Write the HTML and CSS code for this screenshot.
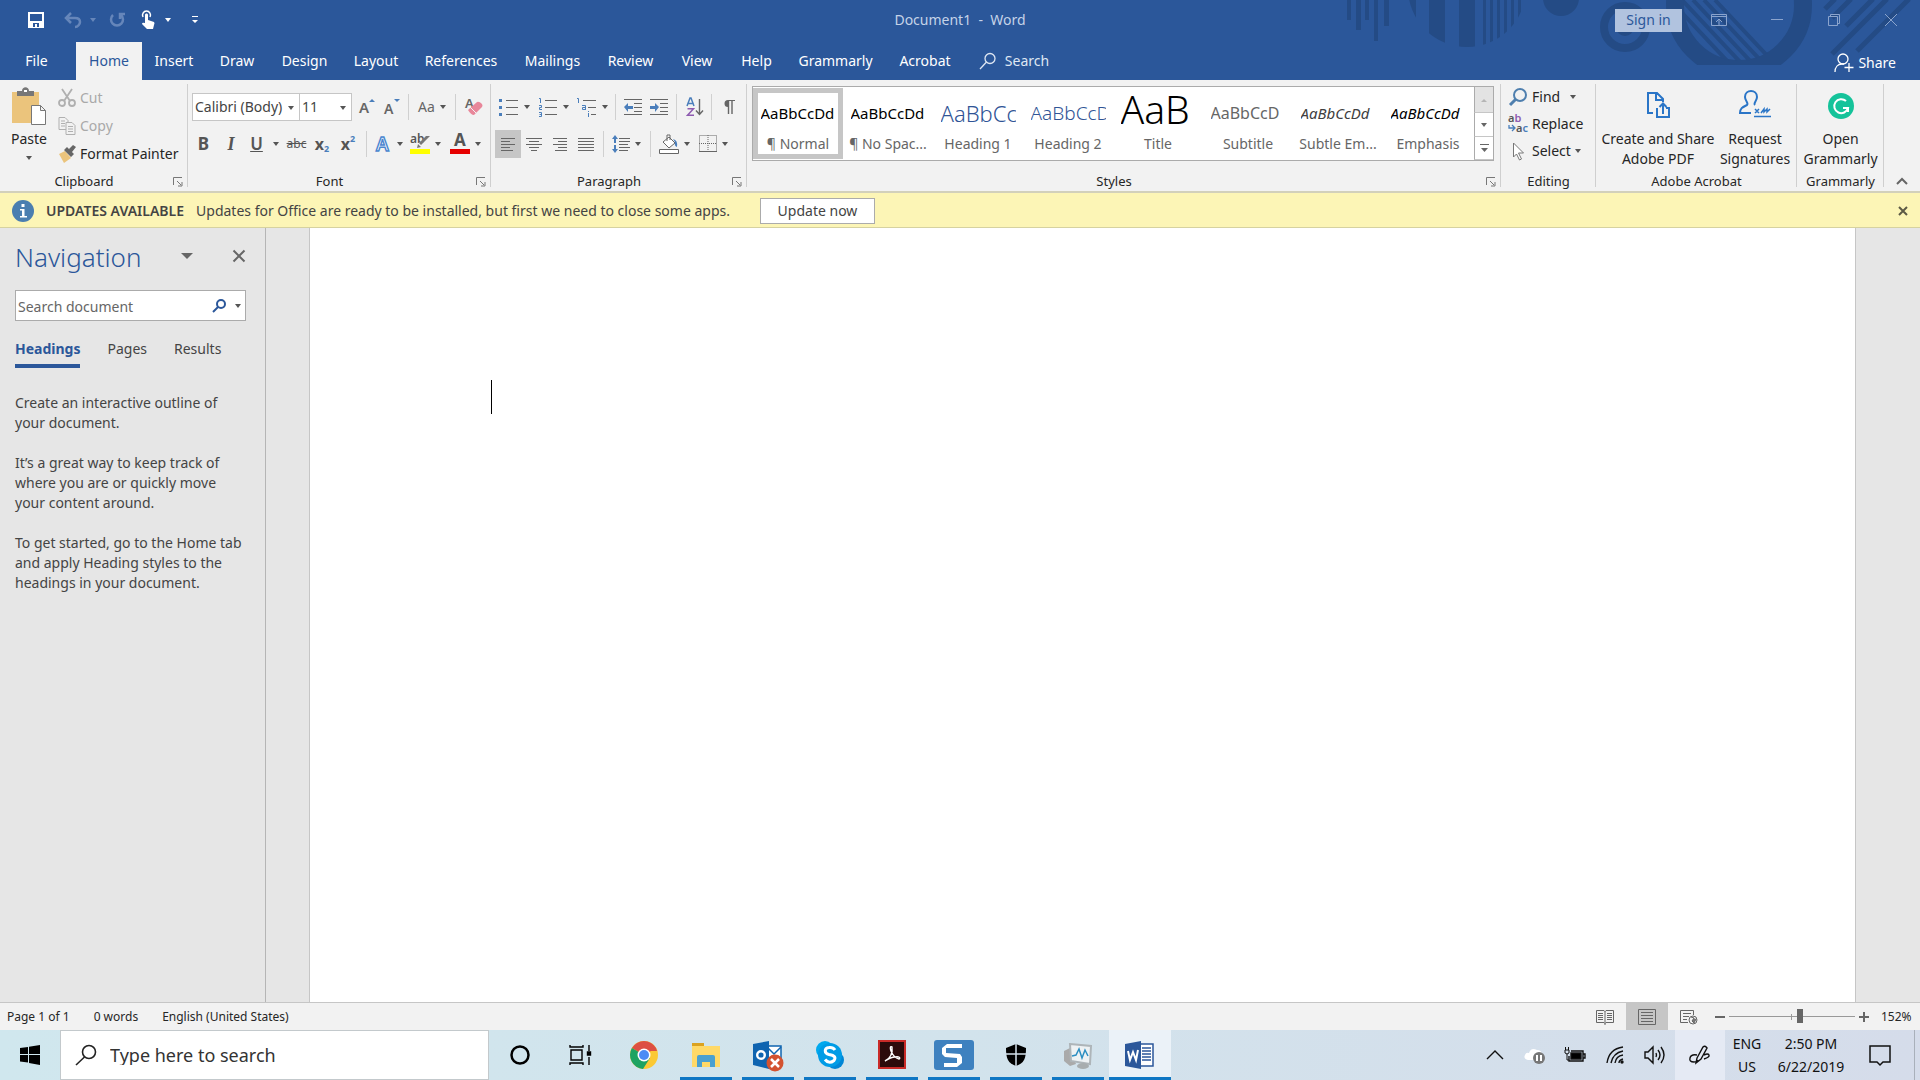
FILE: index.html
```html
<!DOCTYPE html>
<html lang="en">
<head>
<meta charset="utf-8">
<title>Document1 - Word</title>
<link rel="stylesheet" href="styles.css">
</head>
<body>
<header class="top">
  <svg class="pattern" width="640" height="80" viewBox="0 0 640 80" aria-hidden="true">
    <defs>
      <clipPath id="disc"><circle cx="187" cy="-12" r="59"/></clipPath>
      <clipPath id="bowl"><circle cx="459" cy="5" r="56"/></clipPath>
      <clipPath id="cut"><rect x="380" y="0" width="160" height="65"/></clipPath>
    </defs>
    <path d="M67 0h4v20h-4zM76 0h5v30h-5zM85 0h4v20h-4zM94 0h4v41h-4zM104 0h5v26h-5z"/>
    <g clip-path="url(#disc)"><path d="M124 0h12v60h-12zM149 0h16v60h-16zM179 0h16v60h-16zM203 0h3v60h-3zM210 0h3v60h-3zM217 0h3v60h-3zM224 0h3v60h-3zM231 0h3v60h-3zM238 0h3v60h-3zM245 0h3v60h-3z"/></g>
    <circle cx="281" cy="-2" r="18"/>
    <circle cx="345" cy="27" r="21" fill="none" stroke="#244b85" stroke-width="8"/>
    <circle cx="345" cy="27" r="9"/>
    <g clip-path="url(#cut)"><circle cx="459" cy="5" r="64" fill="none" stroke="#244b85" stroke-width="18"/></g>
    <g clip-path="url(#bowl)" stroke="#244b85" stroke-width="4"><path d="M390 0l60 64M402 0l60 64M413 0l60 64M424 0l60 64M435 0l60 64"/></g>
    <g stroke="#244b85" stroke-width="5"><path d="M545 9l10-10M552 18l19-19M566 26l27-27M552 54l55-55M577 51l52-52"/></g>
  </svg>
  <div class="titlebar">
    <div class="quick">
      <button aria-label="Save"><svg width="16" height="16" viewBox="0 0 16 16"><path d="M1 1h14v14H1z" fill="none" stroke="#fff" stroke-width="2"/><path d="M2 9h12v6H2z" fill="#fff"/><path d="M5 11h6v4H9v-3H7v3H5z" fill="#2b579a"/></svg></button>
      <button class="faded" aria-label="Undo"><svg width="18" height="16" viewBox="0 0 18 16" fill="none" stroke="#7f9bc8" stroke-width="2.500"><path d="M7 1L2 6l5 5M2 6h9c4 0 5 2 5 4s-2 5-5 5"/></svg><i class="caret"></i></button>
      <button class="faded" aria-label="Redo"><svg width="18" height="16" viewBox="0 0 18 16" fill="none" stroke="#7f9bc8" stroke-width="2.500"><path d="M5 3a6 6 0 1 0 8 0M17 2h-5v5"/></svg></button>
      <button class="touch" aria-label="Touch mode"><svg width="16" height="18" viewBox="0 0 16 18"><path d="M2 6a4 4 0 1 1 7 0" fill="none" stroke="#fff" stroke-width="1.500"/><path d="M4 4c0-2 3-2 3 0v5l6 2q1 1 0 3l-1 4H6l-5-5q0-2 3-1z" fill="#fff"/></svg><i class="caret"></i></button>
      <button aria-label="Customize toolbar"><svg width="8" height="8" viewBox="0 0 8 8" fill="#fff"><path d="M1 0h6v1H1zM1 4h6L4 7z"/></svg></button>
    </div>
    <h1 class="doctitle">Document1&nbsp; -&nbsp; Word</h1>
    <div class="window">
      <button class="signin">Sign in</button>
      <button aria-label="Ribbon display options"><svg width="16" height="14" viewBox="0 0 16 14"><path d="M.5 1.500h15v11H.5zM.5 3.500h15M8 12V6M5 9l3-3 3 3"/></svg></button>
      <button aria-label="Minimize"><svg width="14" height="14" viewBox="0 0 14 14"><path d="M1 6.500h12"/></svg></button>
      <button aria-label="Restore"><svg width="14" height="14" viewBox="0 0 14 14"><path d="M1.500 3.500h9v9h-9zM3.500 3V1.500h9v9H11"/></svg></button>
      <button aria-label="Close"><svg width="14" height="14" viewBox="0 0 14 14"><path d="M1 1l12 12M13 1L1 13"/></svg></button>
    </div>
  </div>
  <nav class="tabs">
    <button class="file">File</button><button class="on">Home</button><button>Insert</button><button>Draw</button><button>Design</button><button>Layout</button><button>References</button><button>Mailings</button><button>Review</button><button>View</button><button>Help</button><button>Grammarly</button><button>Acrobat</button>
    <button class="tell"><svg width="18" height="18" viewBox="0 0 18 18" fill="none" stroke="#dfe7f3" stroke-width="1.300"><circle cx="11" cy="6.500" r="5"/><path d="M7.500 10L1 17"/></svg>Search</button>
    <button class="share"><svg width="20" height="20" viewBox="0 0 20 20" fill="none" stroke="#fff" stroke-width="1.300"><circle cx="9" cy="6" r="5"/><path d="M1 19c0-5 3-8 7-8h2M15 10v9M10.500 14.500h9"/></svg>Share</button>
  </nav>
</header>

<section class="ribbon">
  <div class="group">
    <div class="body clip">
      <button class="paste"><svg width="36" height="40" viewBox="0 0 36 40"><path d="M1 5h27v31H1z" fill="#ebc47c"/><path d="M6 4h5c0-5 7-5 7 0h5v5H6z" fill="#777"/><path d="M13 3h3v2h-3z" fill="#fff"/><path d="M20.500 18.500h9l5 5v14h-14zM29.500 18.500v5h5" fill="#fff" stroke="#777"/></svg><span>Paste</span><i class="caret"></i></button>
      <div class="rows">
        <button class="off"><svg width="18" height="18" viewBox="0 0 18 18" fill="none" stroke="#b0b0b0" stroke-width="1.800"><path d="M4 0l8 12M14 0L6 12"/><circle cx="4" cy="14" r="3"/><circle cx="14" cy="14" r="3"/></svg>Cut</button>
        <button class="off"><svg width="18" height="18" viewBox="0 0 18 18" fill="#f2f2f2" stroke="#b0b0b0"><path d="M1 .5h6l3 3v9H1z"/><path d="M3 4h4M3 6.500h4M3 9h4"/><path d="M8 5.500h6l3 3v9H8z"/><path d="M10 9.500h5M10 12h5M10 14.500h5"/></svg>Copy</button>
        <button><svg width="18" height="18" viewBox="0 0 18 18"><path d="M1 9l6-3 6 7-7 5z" fill="#ebc47c"/><path d="M6 5l3-3 7 7-3 3zM11 4l4-4 3 2-4 5z" fill="#666"/></svg>Format Painter</button>
      </div>
    </div>
    <div class="label">Clipboard<button class="launch" aria-label="Clipboard settings"><svg width="10" height="10" viewBox="0 0 10 10"><path d="M.5 8V.5H9M4 4l4 4M9 5v4H5"/></svg></button></div>
  </div>

  <div class="group">
    <div class="body two">
      <div class="line font1">
        <div class="combo"><select aria-label="Font"><option>Calibri (Body)</option></select><i class="caret"></i></div>
        <div class="combo"><select aria-label="Font size"><option>11</option></select><i class="caret"></i></div>
        <button aria-label="Grow font"><svg width="18" height="20" viewBox="0 0 18 20"><text x="1" y="16" font-size="15" font-weight="600" fill="#666">A</text><path d="M11 5h6l-3-3z" fill="#4a7ebb"/></svg></button>
        <button aria-label="Shrink font"><svg width="18" height="20" viewBox="0 0 18 20"><text x="1" y="17" font-size="14" font-weight="600" fill="#666">A</text><path d="M11 2h6l-3 3z" fill="#4a7ebb"/></svg></button>
        <i class="sep"></i>
        <button class="aa">Aa<i class="caret"></i></button>
        <i class="sep"></i>
        <button aria-label="Clear formatting"><svg width="20" height="22" viewBox="0 0 20 22"><text x="1" y="12" font-size="13" font-weight="600" fill="#666">A</text><path d="M4 14l9-8q2-1 5 2 1 2 0 3l-8 8q-3 0-6-5z" fill="#e8879a"/><path d="M6 11l6 6" stroke="#f2f2f2"/></svg></button>
      </div>
      <div class="line font2">
        <button class="b">B</button><button class="i">I</button><button class="u">U</button><i class="caret"></i><button class="s">abc</button>
        <button class="x">x<sub>2</sub></button><button class="x">x<sup>2</sup></button>
        <i class="sep"></i>
        <button aria-label="Text effects"><svg width="18" height="20" viewBox="0 0 18 20"><text x="2" y="17" font-size="19" font-weight="600" fill="#fff" stroke="#4a86cf" stroke-width="1.400">A</text></svg><i class="caret"></i></button>
        <button aria-label="Highlight"><svg width="20" height="22" viewBox="0 0 20 22"><text x="0" y="10" font-size="12" font-weight="600" fill="#555">ab</text><path d="M20 3l-9 9-2-2 7-7zM8 11l3 3-4 1z" fill="#777"/><path d="M0 16h20v5H0z" fill="#ff0"/></svg><i class="caret"></i></button>
        <button aria-label="Font color"><svg width="20" height="22" viewBox="0 0 20 22"><text x="4" y="13" font-size="17" font-weight="700" fill="#555">A</text><path d="M0 16h20v5H0z" fill="#e60000"/></svg><i class="caret"></i></button>
      </div>
    </div>
    <div class="label">Font<button class="launch" aria-label="Font settings"><svg width="10" height="10" viewBox="0 0 10 10"><path d="M.5 8V.5H9M4 4l4 4M9 5v4H5"/></svg></button></div>
  </div>

  <div class="group">
    <div class="body two">
      <div class="line para1">
        <button aria-label="Bullets"><svg width="20" height="18" viewBox="0 0 20 18"><path d="M0 1h3v3H0zM0 8h3v3H0zM0 15h3v3H0z" fill="#4a7ebb"/><path d="M7 2.500h12M7 9.500h12M7 16.500h12" stroke="#666"/></svg><i class="caret"></i></button>
        <button aria-label="Numbering"><svg width="20" height="20" viewBox="0 0 20 20"><path d="M1 1.500h1.500V6M1 8.500h2.500v2H1.500v2H4M1 15.500h2.500v4H1M1.500 17.500h2" fill="none" stroke="#4a7ebb"/><path d="M7 3.500h12M7 10.500h12M7 17.500h12" stroke="#666"/></svg><i class="caret"></i></button>
        <button aria-label="Multilevel list"><svg width="20" height="20" viewBox="0 0 20 20"><path d="M0 1.500h1.500V6M5 8.500h3.500V13M8.500 10.500H5.500v2h3M11.500 16v4M11.500 14v1" fill="none" stroke="#4a7ebb"/><path d="M6 3.500h13M11 10.500h8M14 17.500h5" stroke="#666"/></svg><i class="caret"></i></button>
        <i class="sep"></i>
        <button aria-label="Decrease indent"><svg width="18" height="16" viewBox="0 0 18 16"><path d="M0 .5h18M10 4.500h8M10 8.500h8M10 12.500h8M0 15.500h18" stroke="#666"/><path d="M0 8l4-4v3h5v3H4v3z" fill="#4a7ebb"/></svg></button>
        <button aria-label="Increase indent"><svg width="18" height="16" viewBox="0 0 18 16"><path d="M0 .5h18M10 4.500h8M10 8.500h8M10 12.500h8M0 15.500h18" stroke="#666"/><path d="M9 8L5 4v3H0v3h5v3z" fill="#4a7ebb"/></svg></button>
        <i class="sep"></i>
        <button aria-label="Sort"><svg width="18" height="20" viewBox="0 0 18 20"><path d="M1 9l3-8h1l3 8M2 6.500h5" fill="none" stroke="#4a7ebb" stroke-width="1.500"/><path d="M1.500 11.700h6L1.500 18.300h6.500" fill="none" stroke="#8e5bb0" stroke-width="1.500"/><path d="M13.500 2v15M10 13.500l3.500 4 3.500-4" fill="none" stroke="#666" stroke-width="1.400"/></svg></button>
        <i class="sep"></i>
        <button aria-label="Show marks"><svg width="12" height="16" viewBox="0 0 12 16"><path d="M5 1h7v1H5zM5 1v7a3.500 3.500 0 0 1 0-7z" fill="#666"/><path d="M5.500 1v14M9 1v14" stroke="#666" stroke-width="1.400"/></svg></button>
      </div>
      <div class="line para2">
        <button class="pressed" aria-label="Align left"><svg width="16" height="13" viewBox="0 0 16 13"><path d="M1 .5h14M1 3.500h9M1 6.500h14M1 9.500h9M1 12.500h12"/></svg></button>
        <button aria-label="Center"><svg width="16" height="13" viewBox="0 0 16 13"><path d="M0 .5h16M3 3.500h10M0 6.500h16M3 9.500h10M5 12.500h6"/></svg></button>
        <button aria-label="Align right"><svg width="16" height="13" viewBox="0 0 16 13"><path d="M1 .5h14M6 3.500h9M1 6.500h14M6 9.500h9M3 12.500h12"/></svg></button>
        <button aria-label="Justify"><svg width="16" height="13" viewBox="0 0 16 13"><path d="M0 .5h16M0 3.500h16M0 6.500h16M0 9.500h16M0 12.500h16"/></svg></button>
        <i class="sep"></i>
        <button aria-label="Line spacing"><svg width="18" height="18" viewBox="0 0 18 18"><path d="M7 3.500h11M7 6.500h11M7 9.500h9M7 12.500h11M7 15.500h9"/><path d="M3 0l3 4H4v4H2V4H0zM3 18l3-4H4v-4H2v4H0z" fill="#4a7ebb" class="flat"/></svg><i class="caret"></i></button>
        <i class="sep"></i>
        <button aria-label="Shading"><svg width="20" height="20" viewBox="0 0 20 20"><path d="M4 8l6-5 6 6-6 5zM8 7V1h3v5M.5 15.500h19v4H.5z" fill="#fff"/><path d="M14 5q5 1 4 8-3-1-2-5z" fill="#4a7ebb" class="flat"/></svg><i class="caret"></i></button>
        <button aria-label="Borders"><svg width="18" height="18" viewBox="0 0 18 18"><path d="M.5.5h17v16H.5zM9 0v17M0 8.500h18" fill="none" stroke-dasharray="1 1"/><path d="M0 16.500h18"/></svg><i class="caret"></i></button>
      </div>
    </div>
    <div class="label">Paragraph<button class="launch" aria-label="Paragraph settings"><svg width="10" height="10" viewBox="0 0 10 10"><path d="M.5 8V.5H9M4 4l4 4M9 5v4H5"/></svg></button></div>
  </div>

  <div class="group">
    <div class="body">
      <div class="gallery">
        <div class="cells">
          <button class="sel"><b>AaBbCcDd</b><span>¶ Normal</span></button>
          <button><b>AaBbCcDd</b><span>¶ No Spac...</span></button>
          <button><b class="h1">AaBbCc</b><span>Heading 1</span></button>
          <button><b class="h2">AaBbCcD</b><span>Heading 2</span></button>
          <button><b class="ti">AaB</b><span>Title</span></button>
          <button><b class="su">AaBbCcD</b><span>Subtitle</span></button>
          <button><b class="se">AaBbCcDd</b><span>Subtle Em...</span></button>
          <button><b class="em">AaBbCcDd</b><span>Emphasis</span></button>
        </div>
        <div class="scroller">
          <button class="dim" aria-label="Previous styles"><svg width="8" height="4" viewBox="0 0 8 4"><path d="M1 4h6L4 1z" fill="#b5b5b5"/></svg></button>
          <button aria-label="Next styles"><svg width="8" height="4" viewBox="0 0 8 4"><path d="M1 0h6L4 4z" fill="#666"/></svg></button>
          <button aria-label="More styles"><svg width="9" height="9" viewBox="0 0 9 9"><path d="M0 0h9v1H0zM1 4h7L4.500 8z" fill="#666"/></svg></button>
        </div>
      </div>
    </div>
    <div class="label">Styles<button class="launch" aria-label="Styles settings"><svg width="10" height="10" viewBox="0 0 10 10"><path d="M.5 8V.5H9M4 4l4 4M9 5v4H5"/></svg></button></div>
  </div>

  <div class="group">
    <div class="body rows edit">
      <button><svg width="20" height="20" viewBox="0 0 20 20" fill="none" stroke="#4f7fae" stroke-width="2"><circle cx="12" cy="8" r="6"/><path d="M8 12l-6 6" stroke-width="3"/></svg>Find<i class="caret far"></i></button>
      <button><svg width="20" height="20" viewBox="0 0 20 20"><text x="0" y="8" font-size="11" font-weight="600" fill="#555">a<tspan fill="#8e5bb0">b</tspan></text><text x="8" y="18" font-size="11" font-weight="600" fill="#555">a<tspan fill="#4a7ebb">c</tspan></text><path d="M1 11v3h6M4 11l3 3-3 3" fill="none" stroke="#4a7ebb" stroke-width="1.300"/></svg>Replace</button>
      <button><svg width="20" height="20" viewBox="0 0 20 20"><path d="M5.500 2v14l3-3 3 6 2-1-3-6h5z" fill="#fff" stroke="#777"/></svg>Select<i class="caret"></i></button>
    </div>
    <div class="label">Editing</div>
  </div>

  <div class="group">
    <div class="body adobe">
      <button class="big"><svg width="32" height="32" viewBox="0 0 32 32"><path d="M11 24H6V4h9l6 6v3M14 4v7h7M15 19v9h12v-9h-3M21 25V15M17.500 18l3.500-3.500 3.500 3.500"/></svg>Create and Share<br>Adobe PDF</button>
      <button class="big"><svg width="32" height="32" viewBox="0 0 32 32"><path d="M12 24H1c0-5 3-6 7-8 2-2-2-4-2-8 0-8 12-8 12 0 0 4-4 6-2 8"/><path d="M15 27.500h17M16 20l4 4M20 20l-4 4M22 24l3-4v3l3-3v3l3-3" stroke-width="1.500"/></svg>Request<br>Signatures</button>
    </div>
    <div class="label">Adobe Acrobat</div>
  </div>

  <div class="group">
    <div class="body">
      <button class="big gram"><svg width="32" height="32" viewBox="0 0 32 32"><circle cx="16" cy="17" r="13" fill="#15c39a" stroke="none"/><path d="M21 12a7 7 0 1 0 2 7h-5M23 23v-4" stroke="#fff" stroke-width="2"/></svg>Open<br>Grammarly</button>
    </div>
    <div class="label">Grammarly</div>
  </div>
  <button class="collapse" aria-label="Collapse ribbon"><svg width="12" height="8" viewBox="0 0 12 8"><path d="M1 7l5-5 5 5" fill="none" stroke="#666" stroke-width="2"/></svg></button>
</section>

<aside class="notice">
  <svg width="22" height="22" viewBox="0 0 22 22"><circle cx="11" cy="11" r="11" fill="#4a7eb0"/><path d="M9.500 4h3v3h-3zM8 9h4.500v7H15v1.500H8V16h2v-5.500H8z" fill="#fff"/></svg>
  <strong>UPDATES AVAILABLE</strong>
  <span>Updates for Office are ready to be installed, but first we need to close some apps.</span>
  <button class="update">Update now</button>
  <button class="x-close" aria-label="Dismiss"><svg width="10" height="10" viewBox="0 0 10 10"><path d="M1 1l8 8M9 1L1 9" stroke="#5c5a45" stroke-width="2"/></svg></button>
</aside>

<main class="work">
  <aside class="nav">
    <div class="navhead"><h2>Navigation</h2>
      <button aria-label="Pane options"><svg width="12" height="6" viewBox="0 0 12 6"><path d="M0 0h12L6 6z" fill="#666"/></svg></button>
      <button aria-label="Close pane"><svg width="14" height="14" viewBox="0 0 14 14"><path d="M1.500 1.500l11 11M12.500 1.500l-11 11" stroke="#666" stroke-width="2"/></svg></button>
    </div>
    <div class="find"><input type="text" placeholder="Search document" aria-label="Search document"><button aria-label="Search"><svg width="14" height="14" viewBox="0 0 14 14" fill="none" stroke="#2b579a" stroke-width="2"><circle cx="9" cy="5" r="4"/><path d="M6 8l-5 5"/></svg><i class="caret"></i></button></div>
    <div class="navtabs"><button class="on">Headings</button><button>Pages</button><button>Results</button></div>
    <p>Create an interactive outline of<br>your document.</p>
    <p>It’s a great way to keep track of<br>where you are or quickly move<br>your content around.</p>
    <p>To get started, go to the Home tab<br>and apply Heading styles to the<br>headings in your document.</p>
  </aside>
  <article class="page"><div class="cursor"></div></article>
</main>

<footer class="status">
  <span>Page 1 of 1</span><span>0 words</span><span>English (United States)</span>
  <div class="views">
    <button aria-label="Read mode"><svg width="18" height="16" viewBox="0 0 18 16"><path d="M.5 1.500H8l1 1 1-1h7.500v12H10l-1 1-1-1H.5zM9 2v14M2 4.500h5M2 6.500h5M2 8.500h5M2 10.500h5M11 4.500h5M11 6.500h5M11 8.500h5M11 10.500h5"/></svg></button>
    <button class="pressed" aria-label="Print layout"><svg width="18" height="16" viewBox="0 0 18 16"><path d="M.5.5h17v15H.5zM3 3.500h12M3 6.500h12M3 9.500h12M3 12.500h12"/></svg></button>
    <button aria-label="Web layout"><svg width="18" height="16" viewBox="0 0 18 16"><path d="M8 13.500H.5v-12h13V6M3 4.500h8M3 7.500h6M3 10.500h4"/><circle cx="13" cy="11" r="4" fill="#f2f2f2"/><path d="M11 8l3 1-2 3 2 2 2-4" fill="#777"/></svg></button>
  </div>
  <button class="step" aria-label="Zoom out"><svg width="10" height="10" viewBox="0 0 10 10"><path d="M0 5h10" stroke-width="2"/></svg></button>
  <div class="slide"><input type="range" min="0" max="100" value="57" aria-label="Zoom"></div>
  <button class="step" aria-label="Zoom in"><svg width="10" height="10" viewBox="0 0 10 10"><path d="M0 5h10M5 0v10" stroke-width="2"/></svg></button>
  <span class="pct">152%</span>
</footer>

<footer class="taskbar">
  <button class="start" aria-label="Start"><svg width="20" height="20" viewBox="0 0 20 20"><path d="M0 3l8-1v7H0zM9 1.800L20 0v9H9zM0 10h8v7.500L0 16.500zM9 10h11v10L9 18z"/></svg></button>
  <label class="tsearch"><svg width="22" height="22" viewBox="0 0 22 22" fill="none" stroke="#222" stroke-width="1.600"><circle cx="14" cy="8" r="6.500"/><path d="M9.500 13L1 21"/></svg><input type="text" placeholder="Type here to search" aria-label="Type here to search"></label>
  <div class="apps">
    <button aria-label="Cortana"><svg width="32" height="32" viewBox="0 0 32 32"><circle cx="16" cy="16" r="8.500" fill="none" stroke="#000" stroke-width="2.500"/></svg></button>
    <button aria-label="Task view"><svg width="32" height="32" viewBox="0 0 32 32" fill="none" stroke="#000" stroke-width="1.400"><path d="M5 11h11v10H5zM4 6v2h13V6M4 26v-2h13v2M23 6v6M23 18v8"/><path d="M21.500 13h3v3h-3z" fill="#000"/></svg></button>
    <button aria-label="Chrome"><svg width="32" height="32" viewBox="0 0 32 32"><circle cx="16" cy="16" r="14" fill="#fbc934"/><path d="M16 16L3.900 9A14 14 0 0 1 28.100 9z" fill="#dd4f43"/><path d="M3.900 9A14 14 0 0 0 15 30l7-11-6-3z" fill="#1da362"/><path d="M16 9h12.100L29 12H16z" fill="#dd4f43"/><circle cx="16" cy="16" r="6.500" fill="#fff"/><circle cx="16" cy="16" r="5" fill="#4c8bf5"/></svg></button>
    <button class="run" aria-label="File Explorer"><svg width="32" height="32" viewBox="0 0 32 32"><path d="M2 4h12v5H2z" fill="#dba220"/><path d="M2 7h28v21H2z" fill="#ffd968"/><path d="M7 28V18q0-2 2-2h14q2 0 2 2v10h-5v-5h-8v5z" fill="#4aa0d0"/></svg></button>
    <button class="run" aria-label="Outlook"><svg width="32" height="32" viewBox="0 0 32 32"><path d="M14 7h15v17H14z" fill="#fff" stroke="#0f64b0" stroke-width="1.500"/><path d="M15 8l7 7 7-7" fill="none" stroke="#0f64b0" stroke-width="1.500"/><path d="M1 5l16-3v28L1 26z" fill="#0f64b0"/><circle cx="9" cy="16" r="3.800" fill="none" stroke="#fff" stroke-width="2.400"/><circle cx="23" cy="24" r="8.500" fill="#d35230"/><path d="M19 20l8 8M27 20l-8 8" stroke="#fff" stroke-width="2.500"/></svg></button>
    <button class="run" aria-label="Skype"><svg width="32" height="32" viewBox="0 0 32 32"><circle cx="11" cy="11" r="9" fill="#00a9ee"/><circle cx="21" cy="21" r="9" fill="#0086d6"/><circle cx="16" cy="16" r="12" fill="#009ce6"/><path d="M21 11q-2-3-6-2.500c-5 .5-5 6 0 7 6 1 7 3 5 6q-5 4-9-1" fill="none" stroke="#fff" stroke-width="3"/></svg></button>
    <button class="run" aria-label="Acrobat"><svg width="32" height="32" viewBox="0 0 32 32"><path d="M3 2h26v27H3z" fill="#2c0b0b" stroke="#c92b28" stroke-width="2"/><path d="M9 22c5-2 8-8 7-14-2-1-2 1-1 4 2 5 4 7 8 8 2-1 0-3-4-2-4 0-7 2-10 4z" fill="none" stroke="#fff" stroke-width="1.400"/></svg></button>
    <button class="run" aria-label="Snagit"><svg width="40" height="32" viewBox="0 0 40 32"><rect y="1" width="40" height="30" rx="3" fill="#3e81bf"/><path d="M28 5v4H12v5l14 1 2 3v6l-5 4H10v-4h13v-5L11 18l-3-3V9l5-4z" fill="#fff"/></svg></button>
    <button class="run" aria-label="Security"><svg width="32" height="32" viewBox="0 0 32 32"><path d="M16 5l10 4c0 11-2 15-10 18C8 24 6 20 6 9z"/><path d="M16 4v25M5 15h22" stroke="#d3e1eb" stroke-width="1.500"/></svg></button>
    <button class="run" aria-label="Performance"><svg width="32" height="32" viewBox="0 0 32 32"><path d="M2 12l6-3 6 16-6 2-6-5z" fill="#aaa"/><path d="M8 5l21 2-1 18-19-3z" fill="#eef2f4" stroke="#aeb5b9" stroke-width="2"/><path d="M10 17l4-1 3-6 3 9 3-8 3 6" fill="none" stroke="#2d8fc2" stroke-width="1.500"/><ellipse cx="21" cy="27" rx="6" ry="3" fill="#a8adaf"/></svg></button>
    <button class="run active" aria-label="Word"><svg width="32" height="32" viewBox="0 0 32 32"><path d="M14 5h15v22H14z" fill="#fff" stroke="#2b579a" stroke-width="1.500"/><path d="M18 9h9M18 12h9M18 15h9M18 18h9M18 21h9" stroke="#2b579a" stroke-width="1.500"/><path d="M1 5l16-3v28L1 27z" fill="#2b579a"/><path d="M4 12l2 9 3-8 3 8 2-10" fill="none" stroke="#fff" stroke-width="2"/></svg></button>
  </div>
  <div class="tray">
    <button aria-label="Show hidden icons"><svg width="20" height="20" viewBox="0 0 20 20"><path d="M2 14l8-8 8 8"/></svg></button>
    <button aria-label="OneDrive"><svg width="22" height="20" viewBox="0 0 22 20"><path d="M4 15q-5-1-3-5 1-3 4-2 2-6 8-3 5 0 5 5v5z" fill="#fff" stroke="none"/><circle cx="15" cy="13" r="6" fill="#777" stroke="none"/><path d="M13 10v6M17 10v6" stroke="#fff" stroke-width="2"/></svg></button>
    <button aria-label="Battery"><svg width="22" height="20" viewBox="0 0 22 20"><path d="M5 11v5h14V6H7M19.500 9H21v4h-1.500"/><path d="M7 8h10v6H7z" fill="#000"/><path d="M1 5h4v3q-2 2-4 0zM1.500 2v3M4.500 2v3M3 9v6h2" stroke-width="1"/></svg></button>
    <button aria-label="Network"><svg width="20" height="20" viewBox="0 0 20 20" stroke-width="1.200"><path d="M2 18Q4 4 18 2M6 18Q8 8 18 6M10 18q1-7 8-8M14 18q0-3 4-4"/><circle cx="17" cy="17" r="1" fill="#000"/></svg></button>
    <button aria-label="Volume"><svg width="22" height="20" viewBox="0 0 22 20"><path d="M1 7h3l5-5v16l-5-5H1zM12 8q1 2 0 4M14 5q4 5 0 10M17 2q6 8 0 16"/></svg></button>
    <button class="pen" aria-label="Ink workspace"><svg width="22" height="22" viewBox="0 0 22 22"><path d="M8 14L14 3q2-2 4 1l-6 11-5 4zM8 11q-6-1-7 3t4 4q3 0 4-2M15 11q4-2 5 0t-5 4"/></svg></button>
    <div class="two-line lang">ENG<br>US</div>
    <div class="two-line clock">2:50 PM<br>6/22/2019</div>
    <button class="note" aria-label="Notifications"><svg width="22" height="22" viewBox="0 0 22 22"><path d="M1 2h20v16h-7l-3 3-3-3H1z" stroke-width="1.500"/></svg></button>
  </div>
</footer>
</body>
</html>
```
FILE: styles.css
```css
* { box-sizing: border-box; }
body {
  margin: 0;
  min-height: 100vh;
  display: flex;
  flex-direction: column;
  font: 14px/20px "Noto Sans", "Open Sans", sans-serif;
  color: #262626;
  background: #e6e6e6;
}
button, input, select { font: inherit; color: inherit; border: 0; background: none; padding: 0; margin: 0; }
button { display: flex; align-items: center; justify-content: center; white-space: nowrap; }
svg { flex: none; display: block; overflow: visible; }
h1, h2, p { margin: 0; font-weight: 400; }
.caret { flex: none; width: 0; height: 0; border: 3px solid transparent; border-top: 4px solid #555; border-bottom: 0; }
.sep { width: 1px; height: 26px; background: #d0d0d0; justify-self: center; }

/* title bar and tabs */
.top { position: relative; background: #2b579a; color: #fff; }
.pattern { position: absolute; right: 0; top: 0; fill: #244b85; overflow: hidden; }
.titlebar { position: relative; display: grid; grid-template-columns: 1fr auto 1fr; align-items: center; height: 42px; padding-bottom: 2px; }
.quick { display: flex; align-items: center; gap: 12px; padding-left: 27px; }
.quick button { gap: 8px; min-width: 18px; }
.quick button:nth-child(2) { padding-left: 7px; }
.quick .touch { padding-left: 3px; }
.quick button:last-child { padding-left: 5px; }
.quick .caret { border-top-color: #fff; }
.faded { opacity: .7; }
.faded .caret { border-top-color: #7f9bc8; }
.doctitle { font-size: 14px; color: #c5d3e8; }
.window { display: flex; align-items: center; justify-content: flex-end; gap: 43px; padding-right: 22px; }
.window svg { fill: none; stroke: #8ba4cd; }
.window .signin { background: #b1c3df; color: #2b579a; width: 67px; height: 23px; margin-right: -14px; }
.tabs { position: relative; display: grid; grid-template-columns: 76px 66px 64px 62px 73px 70px 100px 83px 73px 60px 59px 99px 80px 98px 1fr; height: 38px; }
.tabs .file { padding-right: 3px; }
.tabs .on { background: #f2f2f2; color: #2b579a; }
.tabs .tell { color: #dfe7f3; gap: 8px; }
.tabs .share { justify-content: flex-end; gap: 4px; padding-right: 24px; padding-top: 3px; }

/* ribbon */
.ribbon { display: grid; grid-template-columns: 188px 303px 256px 1fr 95px 201px 87px 36px; padding-top: 4px; height: 113px; background: #f2f2f2; border-bottom: 2px solid #d2d0bb; }
.group { position: relative; display: flex; flex-direction: column; min-width: 0; }
.group::after { content: ""; position: absolute; right: 0; top: 0; bottom: 4px; width: 1px; background: #cfcfcf; }
.body { height: 87px; }
.label { position: relative; display: flex; justify-content: center; font-size: 13px; padding-right: 20px; }
.group:nth-child(n+5) .label { padding-right: 0; }
.launch { position: absolute; right: 5px; top: 6px; }
.launch svg { fill: none; stroke: #777; }
.clip { display: grid; grid-template-columns: 58px 1fr; }
.paste { flex-direction: column; justify-content: flex-start; padding-top: 3px; }
.paste svg { margin-bottom: 2px; }
.paste .caret { margin-top: 7px; }
.rows { display: grid; grid-auto-rows: 28px; }
.rows button { justify-content: flex-start; gap: 4px; }
.off { color: #a9a9a9; }
.rows.edit { grid-auto-rows: 27px; padding-left: 7px; }
.rows.edit button { padding-bottom: 2px; }
.rows .far { margin-left: 6px; }

.two { display: grid; grid-template-rows: 28px 28px; gap: 9px; padding-top: 9px; }
.line { display: grid; align-items: center; }
.line button { height: 28px; gap: 5px; }
.line > .caret { justify-self: center; }
.font1 { grid-template-columns: 108px 52px 30px 20px 12px 36px 10px 28px; padding-left: 4px; }
.combo { position: relative; height: 28px; border: 1px solid #c6c6c6; background: #fff; }
.combo + .combo { margin-left: -1px; }
.combo select { width: 100%; height: 100%; padding: 0 14px 0 2px; appearance: none; color: #444; }
.combo .caret { position: absolute; right: 5px; top: 12px; }
.font1 .aa { color: #666; }
.font2 { grid-template-columns: 27px 28px 23px 16px 25px 26px 26px 10px 34px 40px 40px; padding-left: 2px; color: #555; font-size: 17px; }
.b { font-weight: 700; }
.font2 .i { font-family: "Liberation Serif", serif; font-style: italic; font-weight: 700; font-size: 18px; }
.u { font-weight: 600; text-decoration: underline; }
.s { font-size: 12px; text-decoration: line-through; }
.font2 .x { font-size: 16px; font-weight: 700; gap: 0; }
.x sub, .x sup { font-size: 9px; line-height: 10px; color: #4a7ebb; }
.x sub { padding-top: 10px; }
.x sup { padding-bottom: 10px; }
.para1 { grid-template-columns: 40px 39px 38px 8px 28px 24px 10px 27px 6px 29px; padding-left: 3px; }
.para2 { grid-template-columns: 26px 26px 26px 26px 8px 39px 8px 40px 39px; padding-left: 4px; }
.para2 svg { stroke: #666; fill: none; }
.para2 .flat { stroke: none; }
.pressed { background: #c6c6c6; }

.gallery { display: grid; grid-template-columns: 1fr 19px; height: 75px; margin: 2px 7px 0 5px; border: 1px solid #ababab; background: #fff; }
.cells { display: grid; grid-template-columns: repeat(8, 90px); overflow: hidden; padding: 1px 0; }
.cells button { flex-direction: column; justify-content: flex-start; border: 5px solid transparent; overflow: hidden; color: #666; }
.cells .sel { border-color: #c6c6c6; }
.cells b { height: 41px; line-height: 40px; width: 75px; font-size: 15px; font-weight: 400; color: #000; overflow: hidden; text-align: left; }
.cells .h1 { font-size: 22px; font-weight: 300; color: #2f5496; }
.cells .h2 { font-size: 19px; font-weight: 300; color: #2f5496; }
.cells .ti { font-size: 39px; font-weight: 300; line-height: 32px; }
.cells .su { font-size: 16px; color: #666; }
.cells .se { font-style: italic; color: #404040; }
.cells .em { font-style: italic; }
.scroller { display: grid; grid-template-rows: 26px 24px 1fr; }
.scroller button { border-left: 1px solid #ababab; border-bottom: 1px solid #c6c6c6; }
.scroller .dim { background: #e3e3e3; }
.adobe { display: grid; grid-template-columns: 124px 70px; }
.big { flex-direction: column; justify-content: flex-start; padding-top: 5px; }
.big svg { margin-bottom: 8px; fill: none; stroke: #2a75c7; stroke-width: 2; }
.gram { width: 100%; }
.collapse { align-self: end; height: 20px; }

/* message bar */
.notice { display: flex; align-items: center; height: 35px; padding: 1px 12px 0; background: #fcf5b6; border-bottom: 1px solid #d6d2a0; color: #444; }
.notice strong { margin: 0 12px; font-weight: 600; }
.update { margin-left: 30px; width: 115px; height: 26px; border: 1px solid #ababab; background: #fff; }
.x-close { margin-left: auto; }

/* work area */
.work { flex: 1; display: grid; grid-template-columns: 266px 1fr; }
.nav { border-right: 1px solid #b5b5b5; padding: 12px 19px 0 15px; color: #444; }
.navhead { display: grid; grid-template-columns: 1fr 51px 14px; align-items: center; }
.navhead h2 { font-size: 26px; line-height: 34px; color: #2b579a; font-weight: 300; }
.navhead button { justify-content: flex-start; padding-bottom: 3px; }
.find { display: flex; height: 31px; margin-top: 16px; border: 1px solid #ababab; background: #fff; }
.find input { flex: 1; min-width: 0; padding: 2px 0 0 2px; }
.find button { gap: 9px; padding-right: 4px; }
::placeholder { color: #666; opacity: 1; }
.navtabs { display: flex; gap: 27px; margin: 15px 0 25px; }
.navtabs button { height: 32px; border-bottom: 4px solid transparent; padding-bottom: 2px; }
.navtabs .on { color: #2b579a; font-weight: 700; border-color: #2b579a; }
.nav p { margin-bottom: 20px; white-space: nowrap; }
.page { margin: 0 64px 0 43px; background: #fff; border: solid #c6c6c6; border-width: 0 1px; padding: 152px 181px; }
.cursor { width: 1px; height: 34px; background: #000; }

/* status bar */
.status { display: flex; align-items: center; height: 28px; padding: 0 7px; font-size: 12px; background: #f2f2f2; border-top: 1px solid #c6c6c6; }
.status > span { margin-right: 24px; }
.views { display: flex; align-self: stretch; margin-left: auto; margin-right: 5px; }
.views button { width: 42px; }
.status svg { fill: none; stroke: #666; }
.slide { position: relative; width: 126px; margin: 0 4px; display: flex; }
.slide::before { content: ""; position: absolute; left: 62px; top: 5px; width: 1px; height: 6px; background: #999; }
.slide input { appearance: none; width: 100%; height: 16px; position: relative; }
.slide input::-webkit-slider-runnable-track { height: 1px; background: #999; }
.slide input::-webkit-slider-thumb { appearance: none; width: 6px; height: 14px; margin-top: -7px; background: #666; }
.status .pct { width: 32px; margin: 0 0 0 12px; }

/* taskbar */
.taskbar { display: flex; height: 50px; background: linear-gradient(90deg, #d0e7ee, #d2e3ec 50%, #d5dcea); color: #111; }
.start { width: 60px; }
.tsearch { display: flex; align-items: center; gap: 13px; width: 429px; padding-left: 14px; background: #fff; border: 1px solid #c3c9cc; }
.tsearch input { flex: 1; font-size: 18px; }
.tsearch ::placeholder { color: #333; }
.apps { display: grid; grid-auto-flow: column; grid-auto-columns: 62px; }
.apps button { position: relative; }
.run::after { content: ""; position: absolute; left: 5px; right: 5px; bottom: 0; height: 3px; background: #0f77c4; }
.active { background: #ebf2f8; }
.active::after { left: 0; right: 0; }
.tray { display: flex; margin-left: auto; margin-right: 5px; border-right: 1px solid #a9b0ba; }
.tray button { width: 40px; }
.tray svg { fill: none; stroke: #111; stroke-width: 1.400; }
.tray .pen { width: 50px; background: #e5eaf4; }
.two-line { text-align: center; line-height: 23px; padding-top: 2px; }
.lang { width: 44px; }
.clock { width: 84px; }
.tray .note { width: 61px; padding-right: 7px; }
```
